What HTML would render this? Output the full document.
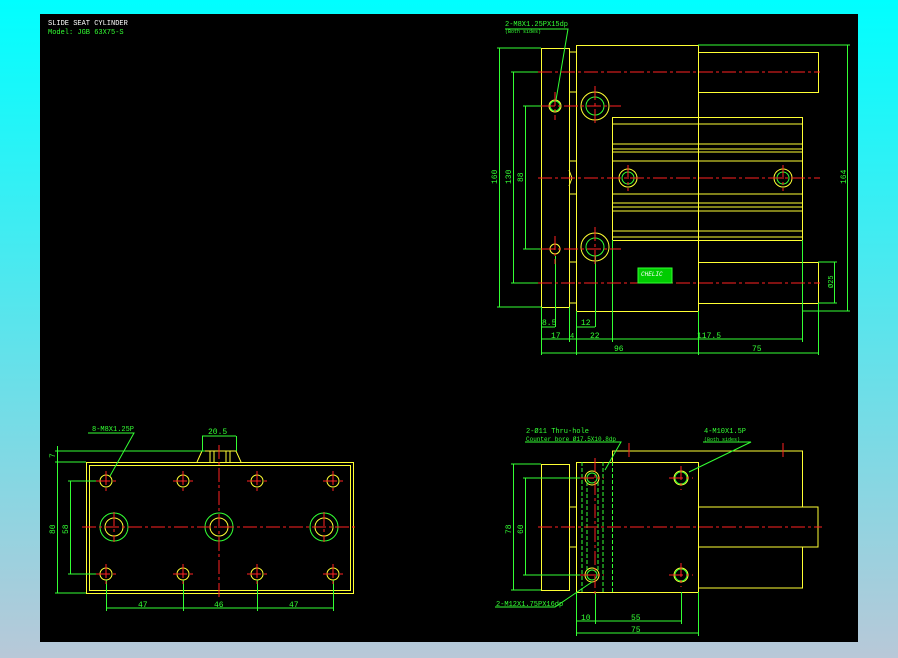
<!DOCTYPE html>
<html><head><meta charset="utf-8"><style>
html,body{margin:0;padding:0;width:898px;height:658px;overflow:hidden;background:linear-gradient(#00ffff,#b8c8d8);}
svg{position:absolute;left:0;top:0}
text{font-family:"Liberation Mono",monospace;}
</style></head><body>
<svg width="898" height="658" viewBox="0 0 898 658">
<rect x="40" y="14" width="818" height="628" fill="#000"/>
<text x="48" y="25" font-size="7" fill="#fff">SLIDE SEAT CYLINDER</text>
<text x="48" y="34" font-size="7" fill="#3f3">Model: JGB 63X75-S</text>

<g fill="none" stroke-width="1">
<!-- TOP VIEW -->
<g stroke="#ff3">
<rect x="541.5" y="48.5" width="28" height="259"/>
<rect x="576.5" y="45.5" width="122" height="266"/>
<rect x="698.5" y="52.5" width="120" height="40"/>
<rect x="698.5" y="262.5" width="120" height="41"/>
<path d="M569.5 52h7M569.5 92h7M569.5 161h7M569.5 194h7M569.5 262h7M569.5 303h7M569.5 52v251M569 170l3 8-3 8"/>
<rect x="612.5" y="117.5" width="190" height="123"/>
<path d="M612 124h190M612 144h190M612 149h190M612 152h190M612 161h190M612 194h190M612 203h190M612 207h190M612 211h190M612 231h190M612 237h190"/>
<circle cx="555" cy="106" r="6"/><circle cx="555" cy="249" r="5"/>
<circle cx="595" cy="106" r="14"/><circle cx="595" cy="247" r="14"/>
<circle cx="628" cy="178" r="9"/><circle cx="783" cy="178" r="9"/>
</g>
<g stroke="#3f3">
<circle cx="595" cy="106" r="9"/><circle cx="595" cy="247" r="9"/>
<circle cx="628" cy="178" r="6"/><circle cx="783" cy="178" r="6"/>
<circle cx="555" cy="106" r="5"/>
<path d="M499.5 48v259M497 48h44M497 307h44M513.5 72v211M511 72h30M511 283h30M525.5 106v143M523 106h30M523 249h30"/>
<path d="M847.5 45v266M698 45h152M802 311h48M834.5 262v41M818 262h19M818 303h19"/>
<path d="M541.5 307v48M555.5 256v71M541 327h14M576.5 311v44M595.5 256v71M576 327h19M569.5 307v35M612.5 240v102M802.5 240v102M818.5 303v52M698.5 311v44M541 339h261M541 353h277"/>
<path d="M505 29h63l-12 71"/>
</g>
<g stroke="#f22" stroke-dasharray="14 3 3 3">
<path d="M538 72h282M538 178h282M538 283h282M541 106h80M541 249h80M555 92v28M555 236v28M595 86v40M595 227v40M628 165v26M783 165v26M614 178h0"/>
</g>
<rect x="638" y="268" width="34" height="15" fill="#0c0" stroke="#3f3"/>
<text x="641" y="276" font-size="6" fill="#fff" font-style="italic">CHELIC</text>

<!-- BOTTOM LEFT -->
<g stroke="#ff3">
<rect x="86.5" y="462.5" width="267" height="131"/>
<rect x="89.5" y="465.5" width="261" height="125"/>
<path d="M197 462l5-11h34l5 11M210 451v11M214 451v11M226 451v11M230 451v11"/>
<circle cx="106" cy="481" r="6"/><circle cx="183" cy="481" r="6"/><circle cx="257" cy="481" r="6"/><circle cx="333" cy="481" r="6"/>
<circle cx="106" cy="574" r="6"/><circle cx="183" cy="574" r="6"/><circle cx="257" cy="574" r="6"/><circle cx="333" cy="574" r="6"/>
<circle cx="114" cy="527" r="9"/><circle cx="219" cy="527" r="9"/><circle cx="324" cy="527" r="9"/>
</g>
<g stroke="#3f3">
<circle cx="114" cy="527" r="14"/><circle cx="219" cy="527" r="14"/><circle cx="324" cy="527" r="14"/>
<path d="M57.5 446v147M55 451h150M55 462h31M55 593h31M70.5 481v93M68 481h30M68 574h30M202.5 436v15M236.5 436v15M202 436h34"/>
<path d="M106.5 580v31M183.5 580v31M257.5 580v31M333.5 580v31M106 608h227"/>
<path d="M88 433h46l-24 43"/>
</g>
<g stroke="#f22" stroke-dasharray="14 3 3 3">
<path d="M82 527h275M219 445v155M96 481h20M173 481h20M247 481h20M323 481h20M96 574h20M173 574h20M247 574h20M323 574h20M106 471v20M183 471v20M257 471v20M333 471v20M106 564v20M183 564v20M257 564v20M333 564v20M114 512v30M324 512v30"/>
</g>
<text x="208" y="434" font-size="8" fill="#3f3">20.5</text>
<text x="92" y="431" font-size="7" fill="#3f3">8-M8X1.25P</text>
<text x="138" y="607" font-size="8" fill="#3f3">47</text>
<text x="214" y="607" font-size="8" fill="#3f3">46</text>
<text x="289" y="607" font-size="8" fill="#3f3">47</text>
<text transform="translate(55,458) rotate(-90)" font-size="8" fill="#3f3">7</text>
<text transform="translate(55,534) rotate(-90)" font-size="8" fill="#3f3">80</text>
<text transform="translate(68,534) rotate(-90)" font-size="8" fill="#3f3">58</text>

<!-- BOTTOM RIGHT -->
<g stroke="#ff3">
<rect x="541.5" y="464.5" width="28" height="126"/>
<rect x="576.5" y="462.5" width="122" height="130"/>
<path d="M569 507h7M569 547h7M612.5 462V451h190v56M698 507h120v40H698M802.5 547v41H698"/>
<circle cx="592" cy="478" r="7"/><circle cx="592" cy="575" r="7"/><circle cx="681" cy="478" r="7"/><circle cx="681" cy="575" r="7"/>
</g>
<g stroke="#3f3">
<path d="M612.5 462v130" stroke-dasharray="4 2"/>
<path d="M582 462v130M603 462v130M587 482v88M598 482v88" stroke-dasharray="4 2"/>
<circle cx="592" cy="478" r="5"/><circle cx="592" cy="575" r="5"/><circle cx="681" cy="478" r="6"/><circle cx="681" cy="575" r="6"/>
<path d="M513.5 464v126M511 464h30M511 590h30M525.5 478v97M523 478h60M523 575h60"/>
<path d="M576.5 592v44M595.5 592v32M681.5 592v32M698.5 592v44M576 621h105M576 633h122"/>
<path d="M525 442h96l-16 28M703 442h48l-62 30M495 607h60l37-25"/>
</g>
<g stroke="#f22" stroke-dasharray="14 3 3 3">
<path d="M538 527h284M595 458v68M595 528v66M580 478h24M580 575h24M669 478h24M669 575h24M681 466v24M681 563v24M629 443v15M783 443v15"/>
</g>
<text x="526" y="433" font-size="7" fill="#3f3">2-Ø11 Thru-hole</text>
<text x="526" y="441" font-size="6" fill="#3f3">Counter bore Ø17.5X10.8dp</text>
<text x="704" y="433" font-size="7" fill="#3f3">4-M10X1.5P</text>
<text x="704" y="441" font-size="5" fill="#3f3">(Both sides)</text>
<text x="496" y="606" font-size="7" fill="#3f3">2-M12X1.75PX16dp</text>
<text x="581" y="620" font-size="8" fill="#3f3">10</text>
<text x="631" y="620" font-size="8" fill="#3f3">55</text>
<text x="631" y="632" font-size="8" fill="#3f3">75</text>
<text transform="translate(511,534) rotate(-90)" font-size="8" fill="#3f3">78</text>
<text transform="translate(523,534) rotate(-90)" font-size="8" fill="#3f3">60</text>
</g>

<!-- top view texts -->
<text x="505" y="26" font-size="7" fill="#3f3">2-M8X1.25PX15dp</text>
<text x="505" y="33" font-size="5" fill="#3f3">(Both sides)</text>
<text transform="translate(497,184) rotate(-90)" font-size="8" fill="#3f3">160</text>
<text transform="translate(511,184) rotate(-90)" font-size="8" fill="#3f3">130</text>
<text transform="translate(523,182) rotate(-90)" font-size="8" fill="#3f3">88</text>
<text transform="translate(846,184) rotate(-90)" font-size="8" fill="#3f3">164</text>
<text transform="translate(833,288) rotate(-90)" font-size="7" fill="#3f3">Ø25</text>
<text x="542" y="325" font-size="8" fill="#3f3">8.5</text>
<text x="581" y="325" font-size="8" fill="#3f3">12</text>
<text x="551" y="338" font-size="8" fill="#3f3">17</text>
<text x="570" y="338" font-size="7" fill="#3f3">4</text>
<text x="590" y="338" font-size="8" fill="#3f3">22</text>
<text x="697" y="338" font-size="8" fill="#3f3">117.5</text>
<text x="614" y="351" font-size="8" fill="#3f3">96</text>
<text x="752" y="351" font-size="8" fill="#3f3">75</text>
</svg>
</body></html>
